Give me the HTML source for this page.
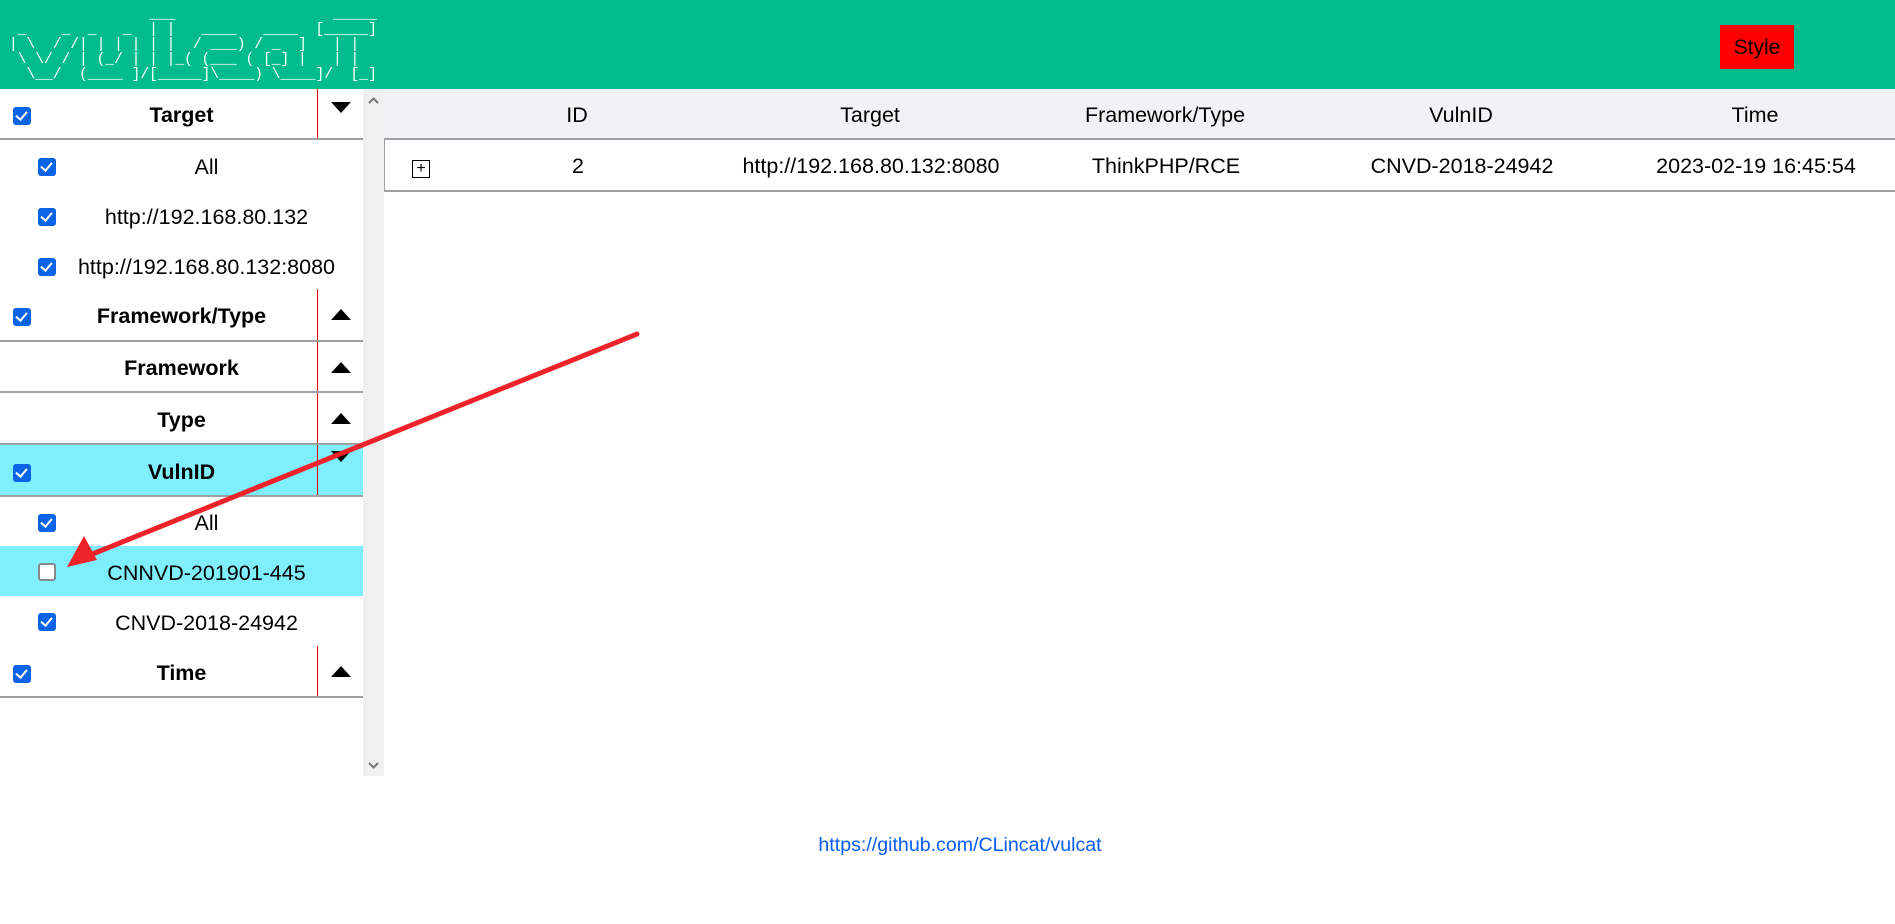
<!DOCTYPE html>
<html><head><meta charset="utf-8"><style>
*{margin:0;padding:0;box-sizing:border-box}
body{width:1895px;height:924px;background:#fff;font-family:"Liberation Sans","Noto Sans CJK SC",sans-serif;color:#000;position:relative;overflow:hidden}
.hdr{position:absolute;left:0;top:0;width:1895px;height:89px;background:#00bc8c}
.logo{position:absolute;left:9px;top:8px;color:#fff;font:14.6px/15px "Liberation Mono",monospace;white-space:pre}
.style{position:absolute;left:1720px;top:25px;width:74px;height:44px;background:#f00;font-size:21px;line-height:46px;text-align:center}
.side{position:absolute;left:0;top:89px;width:363px;height:687px}
.row{position:absolute;left:0;width:363px;display:flex;align-items:center;justify-content:center;padding-top:4px}
.h{font-weight:bold;font-size:21.5px;border-bottom:2px solid #a0a0a4}
.h .sep{position:absolute;left:317px;top:0;bottom:0;width:1px;background:#e00}
.i{font-size:21.5px;padding-left:50px}
.cb{position:absolute;width:18px;height:18px;border-radius:3px;background:#0b63e5}
.cb:after{content:"";position:absolute;left:5px;top:2px;width:5px;height:9px;border:solid #fff;border-width:0 2.5px 2.5px 0;transform:rotate(40deg)}
.cb.off{background:#fff;border:2px solid #888}
.cb.off:after{display:none}
.tri{position:absolute;left:331px;width:0;height:0;border-left:10px solid transparent;border-right:10px solid transparent}
.dn{border-top:11px solid #000}
.up{border-bottom:11px solid #000}
.sb{position:absolute;left:363px;top:89px;width:21px;height:687px;background:#f0f0f0}
.th{position:absolute;left:384px;top:89px;width:1511px;height:51px;background:#f1f2f4;border-bottom:2px solid #a0a0a4}
.tr{position:absolute;left:384px;top:140px;width:1511px;height:52px;border-left:1px solid #a0a0a4;border-bottom:2px solid #a0a0a4}
.c{position:absolute;font-size:21.5px;transform:translateX(-50%);white-space:nowrap}
.plus{position:absolute;left:412px;top:160px;width:18px;height:18px;border:1px solid #000;font-size:16px;line-height:15px;text-align:center}
.foot{position:absolute;left:960px;top:834px;transform:translateX(-50%);color:#0a5cf5;font-size:19.6px}
</style></head><body>
<div class="hdr">
<div class="logo">                ___                  _____
 _    _  _   _  | |   ____   ____  [_____]
| \  / /| | | | | |  / ___) / _  ]   | |
 \ \/ / | (_/ | | |_( (___ ( [_] |   | |
  \__/  (____ ]/[_____]\____) \____]/  [_]</div>
<div class="style">Style</div>
</div>

<div class="side">
<div class="row h" style="top:0;height:51px"><span class="cb" style="left:13px;top:18px"></span>Target<span class="sep"></span><span class="tri dn" style="top:13px"></span></div>
<div class="row i" style="top:51px;height:50px"><span class="cb" style="left:38px;top:18px"></span>All</div>
<div class="row i" style="top:101px;height:50px"><span class="cb" style="left:38px;top:18px"></span>http://192.168.80.132</div>
<div class="row i" style="top:151px;height:50px"><span class="cb" style="left:38px;top:18px"></span>http://192.168.80.132:8080</div>
<div class="row h" style="top:200px;height:53px"><span class="cb" style="left:13px;top:19px"></span>Framework/Type<span class="sep"></span><span class="tri up" style="top:20px"></span></div>
<div class="row h" style="top:253px;height:51px">Framework<span class="sep"></span><span class="tri up" style="top:20px"></span></div>
<div class="row h" style="top:304px;height:52px">Type<span class="sep"></span><span class="tri up" style="top:20px"></span></div>
<div class="row h" style="top:356px;height:52px;background:#80effd"><span class="cb" style="left:13px;top:19px"></span>VulnID<span class="sep"></span><span class="tri dn" style="top:6px"></span></div>
<div class="row i" style="top:408px;height:49px"><span class="cb" style="left:38px;top:17px"></span>All</div>
<div class="row i" style="top:457px;height:50px;background:#80effd"><span class="cb off" style="left:38px;top:17px"></span>CNNVD-201901-445</div>
<div class="row i" style="top:507px;height:50px"><span class="cb" style="left:38px;top:17px"></span>CNVD-2018-24942</div>
<div class="row h" style="top:557px;height:52px"><span class="cb" style="left:13px;top:19px"></span>Time<span class="sep"></span><span class="tri up" style="top:20px"></span></div>
</div>
<div class="sb">
<svg width="21" height="687" style="position:absolute;left:0;top:0"><path d="M6 14l4.5-4.5 4.5 4.5" stroke="#777" stroke-width="2" fill="none"/><path d="M6 674l4.5 4.5 4.5-4.5" stroke="#777" stroke-width="2" fill="none"/></svg>
</div>

<div class="th">
<span class="c" style="left:193px;top:14px">ID</span>
<span class="c" style="left:486px;top:14px">Target</span>
<span class="c" style="left:781px;top:14px">Framework/Type</span>
<span class="c" style="left:1077px;top:14px">VulnID</span>
<span class="c" style="left:1371px;top:14px">Time</span>
</div>
<div class="tr">
<span class="c" style="left:193px;top:14px">2</span>
<span class="c" style="left:486px;top:14px">http://192.168.80.132:8080</span>
<span class="c" style="left:781px;top:14px">ThinkPHP/RCE</span>
<span class="c" style="left:1077px;top:14px">CNVD-2018-24942</span>
<span class="c" style="left:1371px;top:14px">2023-02-19 16:45:54</span>
</div>
<div class="plus">+</div>

<svg width="1895" height="924" style="position:absolute;left:0;top:0;pointer-events:none">
<line x1="637" y1="334" x2="90" y2="555" stroke="#ee2229" stroke-width="5" stroke-linecap="round"/>
<polygon points="67,567 84,536 97,560" fill="#ee2229"/>
</svg>

<div class="foot">https://github.com/CLincat/vulcat</div>
</body></html>
